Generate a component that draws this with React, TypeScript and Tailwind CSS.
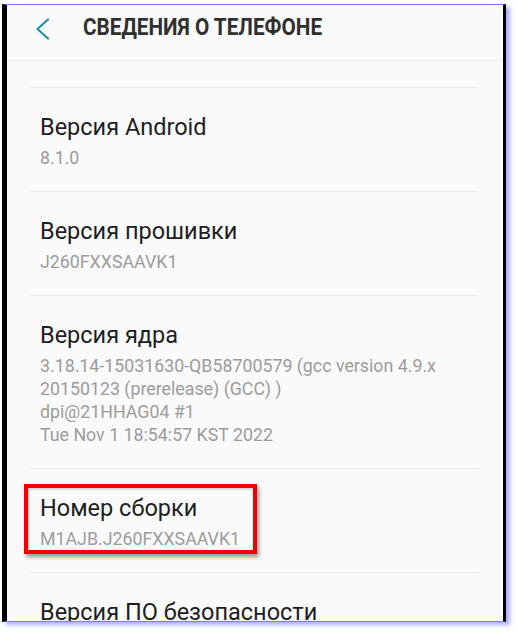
import React from 'react';

type Item = {
  title: string;
  lines: string[];
  highlight?: boolean;
};

const items: Item[] = [
  { title: 'Версия Android', lines: ['8.1.0'] },
  { title: 'Версия прошивки', lines: ['J260FXXSAAVK1'] },
  {
    title: 'Версия ядра',
    lines: [
      '3.18.14-15031630-QB58700579 (gcc version 4.9.x',
      '20150123 (prerelease) (GCC) )',
      'dpi@21HHAG04 #1',
      'Tue Nov 1 18:54:57 KST 2022',
    ],
  },
  { title: 'Номер сборки', lines: ['M1AJB.J260FXXSAAVK1'], highlight: true },
  { title: 'Версия ПО безопасности', lines: [] },
];

function InfoRow({ item }: { item: Item }) {
  return (
    <div className="border-t border-[#e9e9e9] pt-[25px] pb-[22px] pl-[9px]">
      <div className="relative w-fit">
        {item.highlight && (
          <div className="absolute -left-[16px] -top-[10px] w-[233px] h-[70px] border-[4px] border-[#f20000] shadow-[2px_3px_4px_rgba(0,0,0,0.4),inset_1px_1px_3px_rgba(0,0,0,0.25)]" />
        )}
        <div className="text-[23.5px] leading-[28px] text-[#1e1e1e] whitespace-nowrap">{item.title}</div>
        {item.lines.length > 0 && (
          <div className="mt-[5px] text-[17.8px] leading-[23px] text-[#9c9c9c]">
            {item.lines.map((l) => (
              <div key={l} className="whitespace-nowrap">
                {l}
              </div>
            ))}
          </div>
        )}
      </div>
    </div>
  );
}

export default function App() {
  return (
    <div className="w-[518px] h-[634px] bg-white pt-[4px] pl-[2px] font-['Roboto','Noto_Sans',sans-serif]">
      <div className="w-[504px] h-[618px] border-y border-[#7b7bff] border-l-[5px] border-l-black border-r-[3px] border-r-black shadow-[4px_3px_4px_rgba(110,110,255,0.55)] overflow-hidden">
        <div className="h-full bg-[#fafafa]">
          <div className="h-[56px] flex items-start border-b border-[#ebebeb]">
            <svg
              className="ml-[28px] mt-[12px]"
              width="16"
              height="24"
              viewBox="0 0 16 24"
              fill="none"
              stroke="#1f8ea6"
              strokeWidth="2.2"
              strokeLinecap="round"
              strokeLinejoin="round"
            >
              <path d="M13 2.5 L2.5 12 L13 21.5" />
            </svg>
            <div className="ml-[32px] mt-[9px] text-[23px] leading-[28px] font-bold text-[#303030] whitespace-nowrap origin-left scale-x-[0.9]">
              СВЕДЕНИЯ О ТЕЛЕФОНЕ
            </div>
          </div>
          <div className="mx-[24px] pt-[26px]">
            {items.map((it) => (
              <InfoRow key={it.title} item={it} />
            ))}
          </div>
        </div>
      </div>
    </div>
  );
}
